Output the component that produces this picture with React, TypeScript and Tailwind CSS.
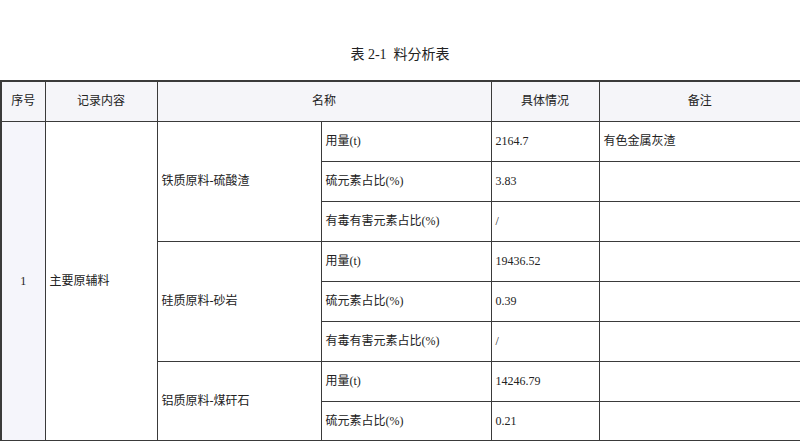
const font = "font-['Liberation_Serif','Noto_Sans_CJK_SC',serif]";

type Sub = { label: string; value: string; note?: string };
type Group = { name: string; items: Sub[] };

const groups: Group[] = [
  {
    name: "铁质原料-硫酸渣",
    items: [
      { label: "用量(t)", value: "2164.7", note: "有色金属灰渣" },
      { label: "硫元素占比(%)", value: "3.83" },
      { label: "有毒有害元素占比(%)", value: "/" },
    ],
  },
  {
    name: "硅质原料-砂岩",
    items: [
      { label: "用量(t)", value: "19436.52" },
      { label: "硫元素占比(%)", value: "0.39" },
      { label: "有毒有害元素占比(%)", value: "/" },
    ],
  },
  {
    name: "铝质原料-煤矸石",
    items: [
      { label: "用量(t)", value: "14246.79" },
      { label: "硫元素占比(%)", value: "0.21" },
    ],
  },
];

const total = groups.reduce((n, g) => n + g.items.length, 0);
const cell = "border border-[#3a3a3a] px-[4px] align-middle";

export default function App() {
  return (
    <div className={`w-[800px] h-[441px] overflow-hidden bg-white text-[#222] ${font}`}>
      <div className="pt-[45px] h-[80px] text-center text-[14px] leading-5 whitespace-pre">表 2-1  料分析表</div>
      <table className="w-[800px] table-fixed border-collapse border-2 border-[#3a3a3a] text-[12px] leading-4">
        <colgroup>
          <col className="w-[44px]" />
          <col className="w-[112px]" />
          <col className="w-[164px]" />
          <col className="w-[170px]" />
          <col className="w-[108px]" />
          <col className="w-[202px]" />
        </colgroup>
        <thead>
          <tr className="h-10 bg-[#f5f5f9]">
            <th className={`${cell} font-normal text-center`}>序号</th>
            <th className={`${cell} font-normal text-center`}>记录内容</th>
            <th className={`${cell} font-normal text-center`} colSpan={2}>
              名称
            </th>
            <th className={`${cell} font-normal text-center`}>具体情况</th>
            <th className={`${cell} font-normal text-center`}>备注</th>
          </tr>
        </thead>
        <tbody>
          {groups.map((g, gi) =>
            g.items.map((it, ii) => (
              <tr key={`${gi}-${ii}`} className="h-10">
                {gi === 0 && ii === 0 && (
                  <>
                    <td className={`${cell} text-center bg-[#f5f5fb]`} rowSpan={total}>
                      1
                    </td>
                    <td className={cell} rowSpan={total}>
                      主要原辅料
                    </td>
                  </>
                )}
                {ii === 0 && (
                  <td className={cell} rowSpan={g.items.length}>
                    {g.name}
                  </td>
                )}
                <td className={cell}>{it.label}</td>
                <td className={cell}>{it.value}</td>
                <td className={cell}>{it.note ?? ""}</td>
              </tr>
            ))
          )}
        </tbody>
      </table>
    </div>
  );
}
